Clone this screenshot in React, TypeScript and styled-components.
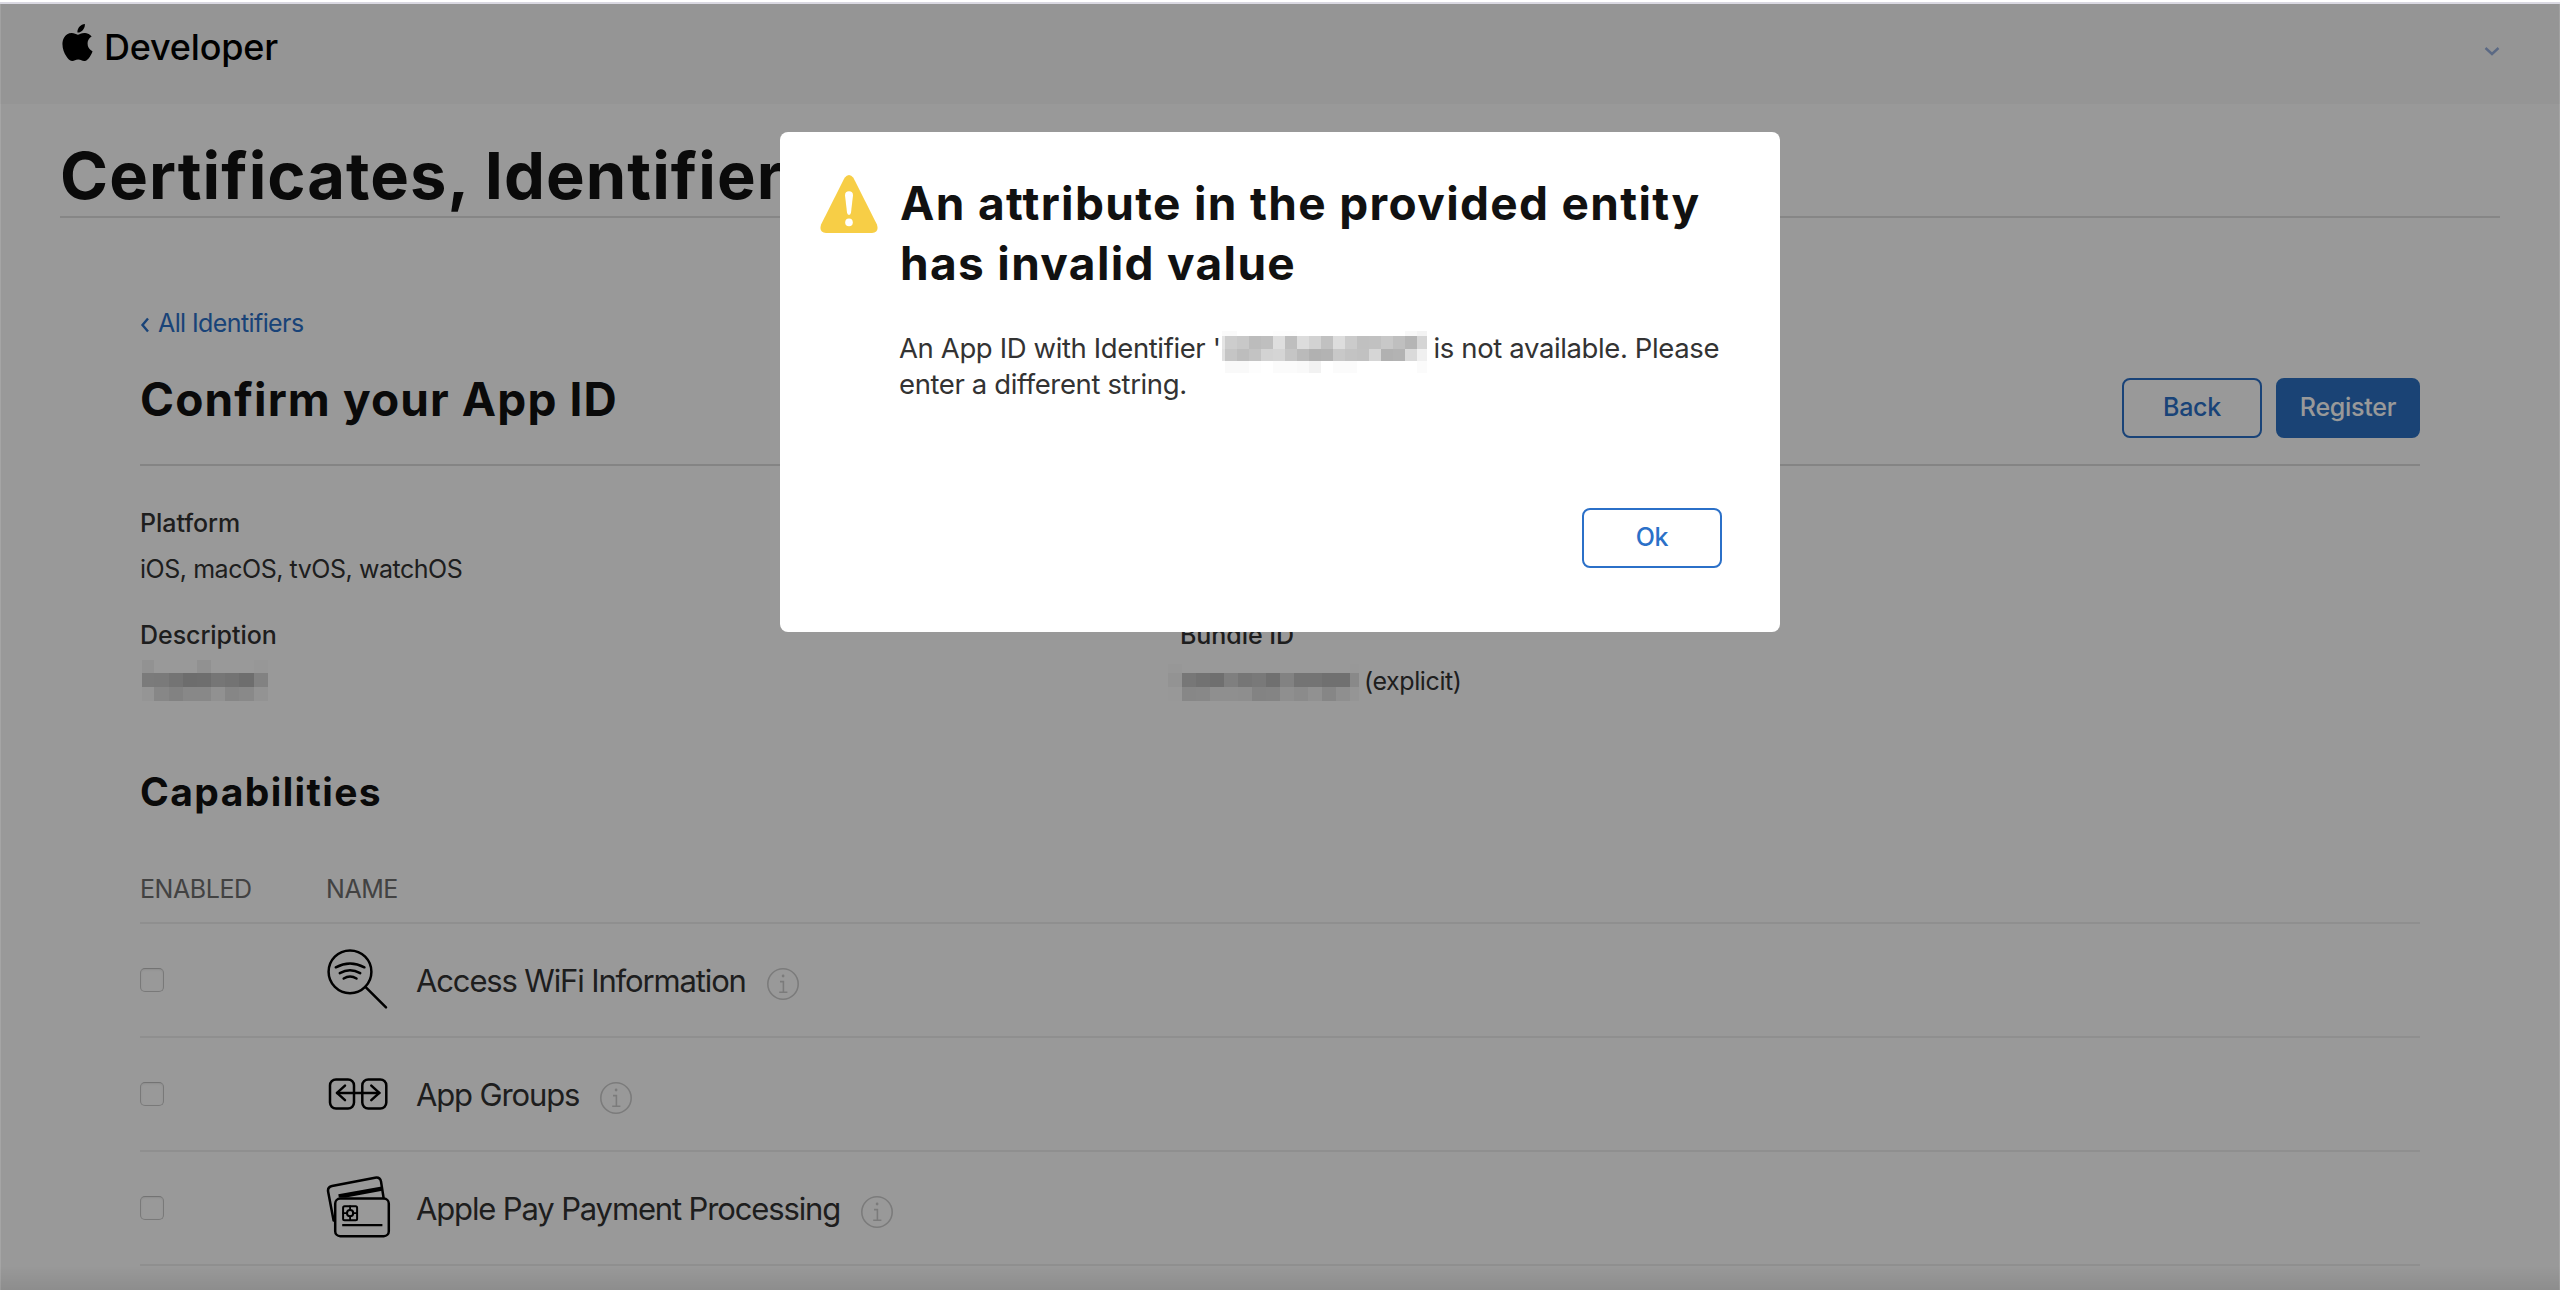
import React from "react";
import styled, { createGlobalStyle, css } from "styled-components";
import { SiApple } from "react-icons/si";

const GlobalStyle = createGlobalStyle`
  *, *::before, *::after { box-sizing: border-box; }
  html, body { margin: 0; padding: 0; background: #fff; }
  body {
    font-family: "Inter", "Liberation Sans", sans-serif;
    color: #333;
    overflow: hidden;
  }
  h1, h2, h3, p { margin: 0; }
`;

/* ---------- page frame ---------- */

const Window = styled.div`
  position: relative;
  display: flex;
  flex-direction: column;
  width: 2560px;
  height: 1290px;
  overflow: hidden;
  background: #fff;
`;

const BrowserEdge = styled.div`
  flex: none;
  height: 4px;
  border-bottom: 2px solid #dad9e2;
  background: #fff;
`;

const Header = styled.header`
  flex: none;
  display: flex;
  justify-content: space-between;
  align-items: flex-start;
  height: 100px;
  padding: 20px 60px 0 59px;
  background: #f9f9f9;
`;

const Brand = styled.div`
  display: flex;
  gap: 8px;
  color: #000;
  svg {
    width: 37px;
    height: 37px;
  }
`;

const BrandName = styled.span`
  margin-top: 3px;
  font-size: 36px;
  font-weight: 500;
  line-height: 40px;
  letter-spacing: -0.2px;
`;

const MenuToggle = styled.svg`
  width: 16px;
  height: 10px;
  margin-top: 22px;
  fill: none;
  stroke: #98b0dc;
  stroke-width: 2.4;
`;

const TitleBar = styled.div`
  flex: none;
  margin: 0 60px;
  padding-top: 32px;
  border-bottom: 2px solid #e0e0e0;
`;

const PageTitle = styled.h1`
  font-size: 65px;
  font-weight: 700;
  line-height: 80px;
  letter-spacing: 1.05px;
  color: #111;
  white-space: nowrap;
`;

const Content = styled.main`
  flex: none;
  display: flex;
  flex-direction: column;
  width: 2280px;
  margin: 87px 0 0 140px;
`;

const BackLink = styled.a`
  display: flex;
  height: 36px;
  font-size: 25px;
  line-height: 36px;
  letter-spacing: -0.6px;
  color: #2a70c8;
  svg {
    width: 10px;
    height: 16px;
    margin: 12px 8px 0 0;
    fill: none;
    stroke: currentColor;
    stroke-width: 2.4;
  }
`;

const SectionHead = styled.div`
  display: flex;
  justify-content: space-between;
  align-items: flex-start;
  height: 97px;
  margin-top: 28px;
  border-bottom: 2px solid #dcdcdc;
`;

const SectionTitle = styled.h2`
  font-size: 46px;
  font-weight: 700;
  line-height: 60px;
  letter-spacing: 1.12px;
  color: #111;
`;

const Actions = styled.div`
  display: flex;
  gap: 14px;
  margin-top: 9px;
`;

const Button = styled.button<{ $primary?: boolean; $width: number }>`
  width: ${(p) => p.$width}px;
  height: 60px;
  padding: 0 0 3px;
  border: 2px solid #2b70c8;
  border-radius: 8px;
  background: transparent;
  font-family: inherit;
  font-size: 25px;
  font-weight: 500;
  letter-spacing: -0.25px;
  color: #2b70c8;
  ${(p) =>
    p.$primary &&
    css`
      border-color: #2c71c4;
      background: #2c71c4;
      color: #fff;
    `}
`;

/* ---------- details ---------- */

const Details = styled.div`
  display: grid;
  grid-template-columns: 1040px 1fr;
  row-gap: 30px;
  margin-top: 39px;
`;

const Field = styled.div<{ $wide?: boolean }>`
  display: flex;
  flex-direction: column;
  gap: 10px;
  ${(p) =>
    p.$wide &&
    css`
      grid-column: 1 / -1;
    `}
`;

const FieldLabel = styled.div`
  font-size: 25px;
  font-weight: 500;
  line-height: 36px;
  letter-spacing: -0.05px;
`;

const FieldValue = styled.div<{ $tracking?: number }>`
  display: flex;
  align-items: flex-start;
  height: 36px;
  font-size: 25px;
  line-height: 36px;
  letter-spacing: ${(p) => p.$tracking ?? -0.46}px;
`;

const MosaicGrid = styled.div<{
  $columns: string;
  $rows: string;
  $margin: string;
}>`
  flex: none;
  display: grid;
  grid-template-columns: ${(p) => p.$columns};
  grid-template-rows: ${(p) => p.$rows};
  align-self: flex-start;
  margin: ${(p) => p.$margin};
`;

const Cell = styled.i<{ $tone: string }>`
  background: #${(p) => p.$tone}${(p) => p.$tone}${(p) => p.$tone};
`;

function Mosaic(props: {
  columns: string;
  rows: string;
  margin: string;
  tones: string[];
}) {
  return (
    <MosaicGrid $columns={props.columns} $rows={props.rows} $margin={props.margin}>
      {props.tones
        .flatMap((row) => row.split(" "))
        .map((tone, i) => (
          <Cell key={i} $tone={tone} />
        ))}
    </MosaicGrid>
  );
}

/* ---------- capabilities ---------- */

const TableTitle = styled.h3`
  margin-top: 69px;
  font-size: 39px;
  font-weight: 700;
  line-height: 48px;
  letter-spacing: 1.4px;
  color: #111;
`;

const TableHead = styled.div`
  display: grid;
  grid-template-columns: 186px 1fr;
  height: 53px;
  margin-top: 55px;
  border-bottom: 2px solid #eee;
  font-size: 25px;
  line-height: 36px;
  letter-spacing: -0.44px;
  color: #6e6e6e;
`;

const Row = styled.div`
  display: grid;
  grid-template-columns: 186px 66px auto 1fr;
  align-items: center;
  height: 114px;
  border-bottom: 2px solid #eee;
`;

const Checkbox = styled.span`
  width: 24px;
  height: 24px;
  border: 1px solid #cacaca;
  border-top-color: #c0c0c0;
  border-radius: 5px;
  box-shadow: inset 0 1px 2px rgba(0, 0, 0, 0.08);
`;

const RowIcon = styled.svg`
  width: 66px;
  height: 66px;
  fill: none;
  stroke: #000;
  stroke-width: 2.5;
  stroke-linecap: round;
  stroke-linejoin: round;
`;

const RowName = styled.span`
  margin: 2px 0 0 24px;
  font-size: 31px;
  line-height: 40px;
  letter-spacing: -1.14px;
  white-space: nowrap;
`;

const InfoIcon = styled.svg`
  width: 34px;
  height: 34px;
  margin: 7px 0 0 20px;
  fill: none;
  stroke: #cecece;
  stroke-width: 1.6;
`;

const BottomShade = styled.div`
  position: absolute;
  left: 0;
  right: 0;
  bottom: 0;
  height: 24px;
  background: linear-gradient(to bottom, rgba(0, 0, 0, 0), rgba(0, 0, 0, 0.08));
`;

function WifiSearchIcon() {
  return (
    <RowIcon viewBox="0 0 66 66">
      <circle cx="24" cy="24.8" r="21.4" />
      <path d="M39.4 39.8 60 60.3" />
      <path d="M9.8 20.3Q24 12.8 38.4 20.3" />
      <path d="M13.8 26.1Q24 20.6 34.2 26.1" />
      <path d="M17.7 31.5Q24 27.6 30.5 31.5" />
    </RowIcon>
  );
}

function AppGroupsIcon() {
  return (
    <RowIcon viewBox="0 0 66 66">
      <rect x="4" y="18.4" width="24" height="29.2" rx="6" />
      <rect x="36.3" y="18.4" width="24" height="29.2" rx="6" />
      <path d="M11 31.9H53.3" />
      <path d="M19 24.6 11 31.9 19 39.2" />
      <path d="M45.3 24.6 53.3 31.9 45.3 39.2" />
    </RowIcon>
  );
}

function CardsIcon() {
  return (
    <RowIcon viewBox="0 0 66 66">
      <path d="M7.6 45.5 2.2 17Q1.2 12 6 11L49 2.7Q54 1.8 55 6.4L57.6 23" />
      <path d="M12.3 19.2 55.6 11.6 56.3 15.8 20 22.6H12.8Z" fill="#000" stroke="none" />
      <rect x="9.2" y="23.6" width="53.6" height="37.6" rx="5" />
      <rect x="17.1" y="31.2" width="14" height="14" rx="1.5" strokeWidth="2" />
      <circle cx="24.1" cy="38.2" r="3.1" strokeWidth="2" />
      <path
        d="M24.1 31.2V35M24.1 41.4V45.2M17.1 38.2H21M27.2 38.2H31.1"
        strokeWidth="1.8"
      />
      <path d="M16.2 50.1H56.4" strokeWidth="2.2" strokeLinecap="butt" />
    </RowIcon>
  );
}

function Info() {
  return (
    <InfoIcon viewBox="0 0 34 34">
      <circle cx="17" cy="17" r="15.2" />
      <path d="M14 14.6H17.4V25M13.2 25.2H21.4" />
      <circle cx="17.1" cy="9" r="1.4" fill="#cecece" stroke="none" />
    </InfoIcon>
  );
}

const capabilities = [
  { name: "Access WiFi Information", Icon: WifiSearchIcon },
  { name: "App Groups", Icon: AppGroupsIcon },
  { name: "Apple Pay Payment Processing", Icon: CardsIcon },
];

/* ---------- dialog ---------- */

const Scrim = styled.div`
  position: absolute;
  inset: 4px 0 0 0;
  display: flex;
  justify-content: center;
  align-items: flex-start;
  padding-top: 128px;
  border: solid rgba(255, 255, 255, 0.12);
  border-width: 0 1px;
  background: rgba(0, 0, 0, 0.4);
`;

const Dialog = styled.section`
  display: flex;
  gap: 22px;
  width: 1000px;
  height: 500px;
  padding: 41px 58px 0 40px;
  border-radius: 8px;
  background: #fff;
`;

const WarningIcon = styled.svg`
  flex: none;
  width: 58px;
  height: 58px;
  margin-top: 2px;
`;

const DialogBody = styled.div`
  flex: 1;
  display: flex;
  flex-direction: column;
`;

const DialogTitle = styled.h2`
  font-size: 46px;
  font-weight: 700;
  line-height: 60px;
  letter-spacing: 1.34px;
  color: #111;
  white-space: nowrap;
`;

const DialogText = styled.div`
  display: flex;
  height: 36px;
  font-size: 27.5px;
  line-height: 36px;
  letter-spacing: -0.38px;
  white-space: pre;
`;

const DialogCopy = styled.div`
  margin: 37px 0 0 -1px;
`;

const DialogFooter = styled.div`
  display: flex;
  justify-content: flex-end;
  margin-top: 106px;
`;

export default function App() {
  return (
    <>
      <GlobalStyle />
      <Window>
        <BrowserEdge />
        <Header>
          <Brand>
            <SiApple />
            <BrandName>Developer</BrandName>
          </Brand>
          <MenuToggle viewBox="0 0 16 10">
            <path d="M1.5 2 8 8 14.5 2" />
          </MenuToggle>
        </Header>
        <TitleBar>
          <PageTitle>Certificates, Identifier</PageTitle>
        </TitleBar>

        <Content>
          <BackLink>
            <svg viewBox="0 0 10 16">
              <path d="M8 1.5 2.5 8 8 14.5" />
            </svg>
            All Identifiers
          </BackLink>
          <SectionHead>
            <SectionTitle>Confirm your App ID</SectionTitle>
            <Actions>
              <Button $width={140}>Back</Button>
              <Button $width={144} $primary>
                Register
              </Button>
            </Actions>
          </SectionHead>

          <Details>
            <Field $wide>
              <FieldLabel>Platform</FieldLabel>
              <FieldValue>iOS, macOS, tvOS, watchOS</FieldValue>
            </Field>
            <Field>
              <FieldLabel>Description</FieldLabel>
              <FieldValue>
                <Mosaic
                  columns="12px 15px 14px 14px 14px 14px 14px 15px 14px"
                  rows="13px 14px 14px"
                  margin="-3px 0 0 2px"
                  tones={[
                    "f3 ff ff ff f2 ff ff ff fc",
                    "cd cb c1 b6 b8 c5 c0 b7 d9",
                    "f9 e1 d9 e3 e3 f2 df e5 f5",
                  ]}
                />
              </FieldValue>
            </Field>
            <Field>
              <FieldLabel>Bundle ID</FieldLabel>
              <FieldValue $tracking={-0.4}>
                <Mosaic
                  columns="14px repeat(12, 14px) 9px"
                  rows="9px 14px 14px"
                  margin="1px 5px 0 -12px"
                  tones={[
                    "fc ff ff ff ff ff ff ff ff ff ff ff ff fd",
                    "f5 c6 be ba d4 c5 ca bb d9 c1 c1 bb bb e4",
                    "fd e1 e3 ee ee ed da dc ee e8 f2 df ee f8",
                  ]}
                />
                (explicit)
              </FieldValue>
            </Field>
          </Details>

          <TableTitle>Capabilities</TableTitle>
          <TableHead>
            <span>ENABLED</span>
            <span>NAME</span>
          </TableHead>
          {capabilities.map(({ name, Icon }) => (
            <Row key={name}>
              <Checkbox />
              <Icon />
              <RowName>{name}</RowName>
              <Info />
            </Row>
          ))}
        </Content>
        <BottomShade />

        <Scrim>
          <Dialog role="alertdialog">
            <WarningIcon viewBox="0 0 58 58">
              <path
                d="M24.6 2.8Q29-2.6 33.4 2.8L56.8 49.2Q59.6 57.2 52 58H6Q-1.6 57.2 1.2 49.2Z"
                fill="#f7ce46"
              />
              <path
                d="M25 20.2Q25 16.2 29 16.2T33 20.2L31 37.6Q30.7 40 29 40T27 37.6Z"
                fill="#fff"
              />
              <circle cx="29" cy="47.4" r="3.8" fill="#fff" />
            </WarningIcon>
            <DialogBody>
              <DialogTitle>
                An attribute in the provided entity
                <br />
                has invalid value
              </DialogTitle>
              <DialogCopy>
                <DialogText>
                  {"An App ID with Identifier '"}
                  <Mosaic
                    columns="3px repeat(16, 12px) 10px"
                    rows="5px 13px 12px 12px"
                    margin="1px 7px 0 1px"
                    tones={[
                      "fa fa ff ff ff fd fd ff ff ff ff ff ff ff ff ff f8 f3",
                      "e4 cd c8 bc bf de be dc d2 c1 dd cb c0 c1 c8 bf b5 d5",
                      "e0 c5 bd c3 d3 d5 c5 ba b1 b3 c8 c3 c1 d6 b1 b3 da f0",
                      "ff f9 f9 fd ff fb fb f9 f2 ff fb fb ff ff ff ff ff fb",
                    ]}
                  />
                  {"is not available. Please"}
                </DialogText>
                <DialogText>enter a different string.</DialogText>
              </DialogCopy>
              <DialogFooter>
                <Button $width={140}>Ok</Button>
              </DialogFooter>
            </DialogBody>
          </Dialog>
        </Scrim>
      </Window>
    </>
  );
}
